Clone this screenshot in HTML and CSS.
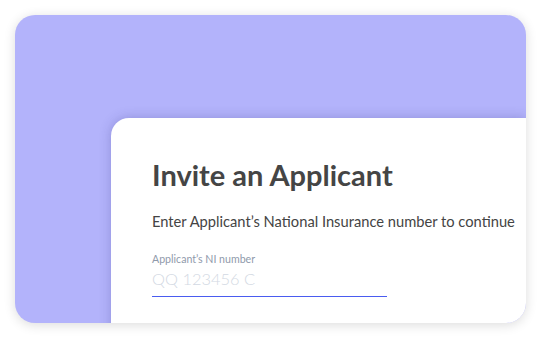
FILE: index.html
```html
<!DOCTYPE html>
<html lang="en">
<head>
    <meta charset="UTF-8">
    <meta name="viewport" content="width=device-width, initial-scale=1.0">
    <title>Invite an Applicant</title>
    <link rel="stylesheet" href="styles.css">
</head>
<body>

<div class="frame">
    <div class="card">
        <h1>Invite an Applicant</h1>
        <p class="intro">Enter Applicant’s National Insurance number to continue</p>

        <label class="field">
            <span class="field-label">Applicant’s NI number</span>
            <input type="text" class="field-input" placeholder="QQ 123456 C">
        </label>
    </div>
</div>

</body>
</html>
```

FILE: styles.css
```css
body {
    font-family: Lato, "Noto Sans", sans-serif;
    background-color: #fff;
    margin: 0;
    padding: 15px;
}
.frame {
    width: 511px;
    height: 308px;
    background-color: #b3b3fb;
    border-radius: 20px;
    overflow: hidden;
    box-shadow: 0 2px 12px rgba(0, 0, 0, 0.14);
}
.card {
    margin: 103px 0 0 96px;
    height: 100%;
    background: white;
    border-top-left-radius: 18px;
    padding: 39px 0 0 41px;
    box-shadow: 0 0 12px rgba(40, 40, 120, 0.25);
}
h1 {
    margin: 0;
    font-size: 29px;
    line-height: 36px;
    font-weight: 700;
    color: #454545;
}
.intro {
    margin: 18px 0 0;
    font-size: 14.7px;
    line-height: 20px;
    color: #444;
}
.field {
    display: block;
    width: 235px;
    margin-top: 21px;
}
.field-label {
    display: block;
    font-size: 10.6px;
    line-height: 14px;
    color: #8f9aab;
}
.field-input {
    display: block;
    width: 100%;
    margin-top: 2px;
    padding: 0 0 6px;
    border: none;
    border-bottom: 1px solid #4a5cf0;
    outline: none;
    background: transparent;
    font-family: inherit;
    font-size: 16.4px;
    line-height: 22px;
    font-weight: 300;
    color: #444;
}
.field-input::placeholder {
    color: #d3d9e3;
}
```
